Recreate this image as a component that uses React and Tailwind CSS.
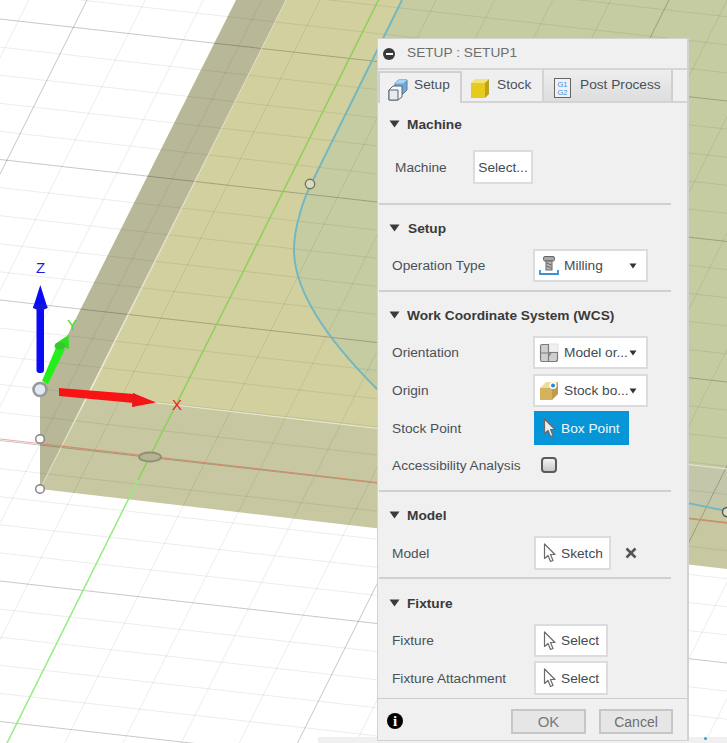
import React from "react";

const font = { fontFamily: '"Liberation Sans", Arial, sans-serif' };

function Scene() {
  const fine = [];
  for (let k = -3; k < 32; k++) {
    const y0 = 19 + 28.1 * k;
    const major = k % 5 === 0;
    fine.push(<line key={"h" + k} x1="0" y1={y0} x2="727" y2={y0 + 82} stroke="#000" strokeOpacity={major ? 0.22 : 0.075} strokeWidth="1" />);
  }
  for (let k = -3; k < 26; k++) {
    const x0 = 87 + 58.2 * k;
    const major = k % 5 === 0;
    if (k === 5) continue;
    fine.push(<line key={"v" + k} x1={x0} y1="0" x2={x0 - 371.5} y2="743" stroke="#000" strokeOpacity={major ? 0.22 : 0.075} strokeWidth="1" />);
  }
  const curve = "M402 0 L314 178 C305 195 294 225 294 250 C294 285 318 330 376 388 C450 450 580 482 727 511";
  return (
    <svg className="absolute inset-0" width="727" height="743" viewBox="0 0 727 743" style={font}>
      <defs>
        <clipPath id="topface"><polygon points="286,0 727,0 727,469 88.6,395" /></clipPath>
        <clipPath id="frontface"><polygon points="88.6,395 727,469 727,569 40,489" /></clipPath>
      </defs>
      <rect width="727" height="743" fill="#ffffff" />
      <polygon points="236,0 286,0 40,489 40,390" fill="#b8b899" />
      <polygon points="286,0 727,0 727,469 88.6,395" fill="#d1d09e" />
      <polygon points="88.6,395 727,469 727,569 40,489" fill="#c7c7a1" />
      <path d={curve + " L727 0 Z"} fill="#c5cca1" clipPath="url(#topface)" />
      <path d={curve + " L727 0 Z"} fill="#c4c6aa" clipPath="url(#frontface)" />
      {fine}
      <line x1="88.6" y1="395" x2="727" y2="469" stroke="#e6e6d4" strokeWidth="1" />
      <line x1="286" y1="0" x2="40" y2="489" stroke="#dcdcc0" strokeWidth="1" />
      <line x1="378.5" y1="0" x2="239" y2="280" stroke="#8bd155" strokeWidth="1.5" />
      <line x1="239" y1="280" x2="138" y2="480" stroke="#8bd155" strokeWidth="1.5" />
      <line x1="138" y1="480" x2="7" y2="743" stroke="#92ee7e" strokeWidth="1.5" />
      <line x1="0" y1="439" x2="40" y2="443.6" stroke="#f3a8a4" strokeWidth="1" />
      <line x1="40" y1="443.6" x2="727" y2="523" stroke="#cf8f6c" strokeWidth="1.3" />
      <path d={curve} fill="none" stroke="#72b6c4" strokeWidth="1.9" />
      <ellipse cx="150" cy="457" rx="11" ry="4.5" fill="#b4b491" stroke="#8f8f76" strokeWidth="2" />
      <circle cx="310" cy="184" r="4.7" fill="#d7dcc2" stroke="#73735f" strokeWidth="1.4" />
      <circle cx="727" cy="512" r="4.5" fill="#d7dcc2" stroke="#555" strokeWidth="1.4" />
      <circle cx="40" cy="439" r="4.3" fill="#fff" stroke="#808080" strokeWidth="1.4" />
      <circle cx="40" cy="489" r="4.3" fill="#fff" stroke="#808080" strokeWidth="1.4" />
      <circle cx="40" cy="389.5" r="6.5" fill="#e4e8f4" stroke="#999999" strokeWidth="2.6" />
      <rect x="36.5" y="306" width="7.5" height="67" rx="3" fill="#0a0af5" />
      <polygon points="40.3,285 47.5,308 33,308" fill="#0a0af5" />
      <ellipse cx="40.3" cy="307" rx="7.3" ry="3" fill="#1414d8" />
      <polygon points="42,381 57,345 65,349 48,384" fill="#22f01a" />
      <polygon points="68.5,335 69,349 55,344" fill="#2de020" />
      <ellipse cx="60" cy="346" rx="5.5" ry="3.5" fill="#35c82a" />
      <polygon points="59,388 134,394 134,403 59,396" fill="#f81414" />
      <polygon points="133,393 156,402.5 132,407" fill="#f81414" />
      <ellipse cx="134" cy="400" rx="1.5" ry="7" fill="#d92020" />
      <text x="40.5" y="273" fontSize="15" fill="#1a1ae6" textAnchor="middle">Z</text>
      <text x="72" y="330" fontSize="15" fill="#3ee024" textAnchor="middle">Y</text>
      <text x="177" y="410" fontSize="15" fill="#ee2222" textAnchor="middle">X</text>
    </svg>
  );
}

function CursorIcon({ light }) {
  return (
    <svg width="13" height="20" viewBox="0 0 13 20" className="shrink-0">
      <path d="M1.5 1 L1.5 15.5 L5 12.5 L7.5 18.5 L10 17.5 L7.5 11.5 L12 11.5 Z" fill={light ? "#e8eef2" : "#fff"} stroke="#6b6b6b" strokeWidth="1.2" strokeLinejoin="round" />
    </svg>
  );
}

function Triangle() {
  return (
    <svg width="11" height="8" viewBox="0 0 11 8" className="shrink-0">
      <polygon points="0.5,0.5 10.5,0.5 5.5,7.5" fill="#3a3a3a" />
    </svg>
  );
}

function SmallArrow() {
  return (
    <svg width="8" height="6" viewBox="0 0 8 6" className="shrink-0">
      <polygon points="0.5,0.5 7.5,0.5 4,5.5" fill="#333" />
    </svg>
  );
}

function Header({ title, indent = "ml-[7px]", className = "" }) {
  return (
    <div className={"flex items-center h-5 pl-[11px] " + className}>
      <Triangle />
      <span className={"pt-[2px] text-[13.7px] leading-5 font-bold text-[#3a3a3a] whitespace-nowrap " + indent}>{title}</span>
    </div>
  );
}

function Sep({ className = "" }) {
  return <div className={"h-[2px] w-[292px] ml-[1px] bg-[#d0d0d0] " + className}></div>;
}

function Row({ label, children, className = "", pad = "pl-[14px]", labelW = "w-[141px]" }) {
  return (
    <div className={"flex items-center " + pad + " " + className}>
      <span className={"pt-[2px] text-[13.7px] text-[#4a5058] whitespace-nowrap shrink-0 " + labelW}>{label}</span>
      {children}
    </div>
  );
}

function Sel({ icon, text }) {
  return (
    <div className="flex items-center w-[115px] h-full bg-white border-2 border-[#dcdcdc] pl-[4px] pr-[9px]">
      <span className="w-[20px] h-[20px] shrink-0">{icon}</span>
      <span className="ml-[5px] pt-[2px] text-[13.7px] text-[#444a52] whitespace-nowrap flex-1">{text}</span>
      <SmallArrow />
    </div>
  );
}

function Pick({ text, w }) {
  return (
    <div className={"flex items-center h-full bg-white border-2 border-[#dcdcdc] pl-[7px] " + w}>
      <CursorIcon />
      <span className="ml-[5px] pt-[2px] text-[13.7px] text-[#444a52] whitespace-nowrap">{text}</span>
    </div>
  );
}

const MillIcon = (
  <svg width="20" height="20" viewBox="0 0 20 20">
    <rect x="4.5" y="0.5" width="11" height="4.5" rx="1.5" fill="#a8a8a8" stroke="#666" />
    <rect x="7" y="5" width="6" height="9" fill="#b5b5b5" stroke="#666" />
    <path d="M7.5 7 L12.5 9 M7.5 10 L12.5 12" stroke="#666" />
    <path d="M1 14 V18 H19 V14" fill="none" stroke="#3c8fd0" strokeWidth="1.8" />
  </svg>
);
const OrientIcon = (
  <svg width="20" height="20" viewBox="0 0 20 20">
    <rect x="9" y="1" width="10" height="8" fill="#f0f0f0" stroke="#e2e2e2" />
    <path d="M3 1.5 H9.5 V9.5 H18.5 V16.5 Q18.5 18.5 16.5 18.5 H3 Q1.5 18.5 1.5 16.5 V3 Q1.5 1.5 3 1.5 Z" fill="#cfcfcf" stroke="#7c7c7c" strokeWidth="1.2" />
    <path d="M1.5 10 H9.5 M9.5 10 V18.5 M9.5 13 L12 10" stroke="#7c7c7c" strokeWidth="1.2" fill="none" />
  </svg>
);
const StockPtIcon = (
  <svg width="20" height="20" viewBox="0 0 20 20">
    <polygon points="1,7 7,1 19,1 13,7" fill="#eedc9c" />
    <polygon points="1,7 13,7 13,19 1,19" fill="#d4b35e" />
    <polygon points="13,7 19,1 19,13 13,19" fill="#bd9c4e" />
    <circle cx="14" cy="4.5" r="3.6" fill="#fff" />
    <circle cx="14" cy="4.5" r="2" fill="#2a86d8" />
  </svg>
);

function TabSetupIcon() {
  return (
    <svg width="20" height="22" viewBox="0 0 20 22" className="shrink-0 mt-[4px]">
      <polygon points="7,4.5 10.5,1 19,1 19,11 15,15 7,15" fill="#6fa8d8" stroke="#5a7c9c" strokeWidth="1" />
      <polygon points="7,4.5 10.5,1 19,1 15,4.5" fill="#a9d3f2" />
      <polygon points="1,11 5,7 14,7 14,18 10,21 1,21" fill="#f5f7fa" stroke="#5b6472" strokeWidth="1" />
      <polygon points="1,11 10,11 10,21 1,21" fill="#e8ebf0" stroke="#5b6472" strokeWidth="1" />
    </svg>
  );
}
function TabStockIcon() {
  return (
    <svg width="18" height="20" viewBox="0 0 18 20" className="shrink-0 mt-[5px]">
      <polygon points="0,5 4,1 18,1 14,5" fill="#f2e27a" />
      <polygon points="0,5 14,5 14,20 0,20" fill="#e8ca1e" />
      <polygon points="14,5 18,1 18,16 14,20" fill="#b9a31f" />
    </svg>
  );
}
function TabPostIcon() {
  return (
    <svg width="17" height="20" viewBox="0 0 17 20" className="shrink-0 mt-[5px]" style={font}>
      <rect x="0.5" y="0.5" width="16" height="19" fill="#eef2f6" stroke="#666" />
      <text x="8.5" y="9" fontSize="7.5" textAnchor="middle" fill="#3b8ee0">G1</text>
      <text x="8.5" y="17" fontSize="7.5" textAnchor="middle" fill="#3b8ee0">G2</text>
    </svg>
  );
}

function Dialog() {
  return (
    <div className="absolute left-[377px] top-[38px] w-[312px] h-[703px] flex flex-col bg-[#f0f0f0] border-l border-t border-r-2 border-b border-[#d2d2d2]" style={font}>
      {/* title */}
      <div className="flex items-center h-[29px] shrink-0 pl-[5px]">
        <div className="w-[12px] h-[12px] rounded-full bg-[#3a3a3a] flex items-center justify-center">
          <div className="w-[7px] h-[2px] bg-white"></div>
        </div>
        <span className="ml-[12px] text-[13.7px] text-[#6e6e6e] whitespace-nowrap">SETUP : SETUP1</span>
      </div>
      <div className="h-[2px] bg-[#d6d6d6] shrink-0"></div>
      {/* tabs */}
      <div className="relative flex items-end h-[33px] shrink-0 border-b-2 border-[#d4d4d4]">
        <div className="relative z-10 -mb-[2px] flex items-center w-[84px] h-[32px] bg-[#f0f0f0] border-l-2 border-t-2 border-r-2 border-[#d0d0d0] pl-[8px]">
          <TabSetupIcon />
          <span className="ml-[6px] mb-[5px] text-[13.7px] text-[#4a5058]">Setup</span>
        </div>
        <div className="flex items-center w-[82px] h-[31px] bg-[#efefef] border-r-2 border-[#d4d4d4] pl-[9px]">
          <TabStockIcon />
          <span className="ml-[8px] text-[13.7px] text-[#4a5058]">Stock</span>
        </div>
        <div className="flex items-center w-[129px] h-[31px] bg-gradient-to-b from-[#eeeeee] to-[#dddddd] border-r-2 border-[#cfcfcf] pl-[10px]">
          <TabPostIcon />
          <span className="ml-[9px] text-[13.7px] text-[#4a5058] whitespace-nowrap">Post Process</span>
        </div>
      </div>

      {/* Machine */}
      <Header title="Machine" className="mt-[11px]" />
      <Row label="Machine" pad="pl-[17px]" labelW="w-[78px]" className="h-[34px] mt-[16px]">
        <div className="flex items-center justify-center w-[60px] h-full pt-[2px] bg-white border-2 border-[#dcdcdc] text-[13.7px] text-[#444a52]">Select...</div>
      </Row>
      <Sep className="mt-[19px]" />

      {/* Setup */}
      <Header title="Setup" indent="ml-[8px]" className="mt-[13px]" />
      <Row label="Operation Type" className="h-[33px] mt-[11px]">
        <Sel icon={MillIcon} text="Milling" />
      </Row>
      <Sep className="mt-[8px]" />

      {/* WCS */}
      <Header title="Work Coordinate System (WCS)" className="mt-[13px]" />
      <Row label="Orientation" className="h-[33px] mt-[11px]">
        <Sel icon={OrientIcon} text="Model or..." />
      </Row>
      <Row label="Origin" className="h-[33px] mt-[5px]">
        <Sel icon={StockPtIcon} text="Stock bo..." />
      </Row>
      <Row label="Stock Point" labelW="w-[142px]" className="h-[34px] mt-[4px]">
        <div className="flex items-center w-[95px] h-full bg-[#0696d7] pl-[9px]">
          <CursorIcon light />
          <span className="ml-[5px] pt-[2px] text-[13.7px] text-[#f2f8fc] whitespace-nowrap">Box Point</span>
        </div>
      </Row>
      <Row label="Accessibility Analysis" labelW="w-[149px]" className="h-[34px] mt-[3px]">
        <div className="w-[16px] h-[16px] rounded-[4px] border-2 border-[#5a5a5a] bg-gradient-to-b from-[#f4f4f4] to-[#c8c8c8]"></div>
      </Row>
      <Sep className="mt-[8px]" />

      {/* Model */}
      <Header title="Model" className="mt-[13px]" />
      <Row label="Model" labelW="w-[142px]" className="h-[34px] mt-[11px]">
        <Pick text="Sketch" w="w-[77px]" />
        <svg width="12" height="12" viewBox="0 0 12 12" className="ml-[14px]">
          <path d="M1.5 1.5 L10.5 10.5 M10.5 1.5 L1.5 10.5" stroke="#555" strokeWidth="2.6" />
        </svg>
      </Row>
      <Sep className="mt-[7px]" />

      {/* Fixture */}
      <Header title="Fixture" className="mt-[14px]" />
      <Row label="Fixture" labelW="w-[142px]" className="h-[33px] mt-[11px]">
        <Pick text="Select" w="w-[74px]" />
      </Row>
      <Row label="Fixture Attachment" labelW="w-[142px]" className="h-[34px] mt-[4px]">
        <Pick text="Select" w="w-[74px]" />
      </Row>

      {/* footer */}
      <div className="mt-[3px] flex-1 flex items-center border-t border-[#cccccc] pl-[9px] pt-[3px]">
        <div className="w-[16px] h-[16px] rounded-full bg-black flex items-center justify-center text-white text-[15px] font-bold leading-none" style={{ fontFamily: '"Liberation Serif", serif' }}>i</div>
        <div className="ml-[108px] flex items-center justify-center w-[75px] h-[25px] pt-[2px] bg-[#e6e6e6] border-2 border-[#c6c6c6] text-[15px] text-[#7a7a7a]">OK</div>
        <div className="ml-[13px] flex items-center justify-center w-[74px] h-[25px] pt-[2px] bg-[#e6e6e6] border-2 border-[#c6c6c6] text-[14px] text-[#6e6e6e]">Cancel</div>
      </div>
    </div>
  );
}

export default function App() {
  return (
    <div className="relative w-[727px] h-[743px] overflow-hidden bg-white">
      <Scene />
      <div className="absolute left-[318px] right-0 bottom-0 h-[6px] bg-[#f0f0f0]">
        <div className="absolute right-[20px] top-0 w-[3px] h-[3px] rounded-full bg-[#3b9ad8]"></div>
      </div>
      <Dialog />
    </div>
  );
}
